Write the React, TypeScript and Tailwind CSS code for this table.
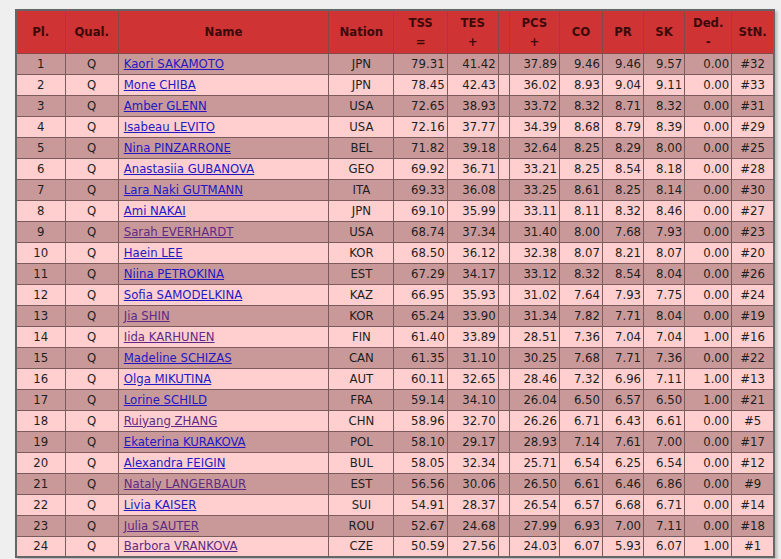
import React from "react";

type Row = [number, string, string, string, string, string, string, string, string, string, string, string, boolean];

const rows: Row[] = [
  [1, "Q", "Kaori SAKAMOTO", "JPN", "79.31", "41.42", "37.89", "9.46", "9.46", "9.57", "0.00", "#32", false],
  [2, "Q", "Mone CHIBA", "JPN", "78.45", "42.43", "36.02", "8.93", "9.04", "9.11", "0.00", "#33", false],
  [3, "Q", "Amber GLENN", "USA", "72.65", "38.93", "33.72", "8.32", "8.71", "8.32", "0.00", "#31", false],
  [4, "Q", "Isabeau LEVITO", "USA", "72.16", "37.77", "34.39", "8.68", "8.79", "8.39", "0.00", "#29", false],
  [5, "Q", "Nina PINZARRONE", "BEL", "71.82", "39.18", "32.64", "8.25", "8.29", "8.00", "0.00", "#25", false],
  [6, "Q", "Anastasiia GUBANOVA", "GEO", "69.92", "36.71", "33.21", "8.25", "8.54", "8.18", "0.00", "#28", false],
  [7, "Q", "Lara Naki GUTMANN", "ITA", "69.33", "36.08", "33.25", "8.61", "8.25", "8.14", "0.00", "#30", false],
  [8, "Q", "Ami NAKAI", "JPN", "69.10", "35.99", "33.11", "8.11", "8.32", "8.46", "0.00", "#27", false],
  [9, "Q", "Sarah EVERHARDT", "USA", "68.74", "37.34", "31.40", "8.00", "7.68", "7.93", "0.00", "#23", true],
  [10, "Q", "Haein LEE", "KOR", "68.50", "36.12", "32.38", "8.07", "8.21", "8.07", "0.00", "#20", false],
  [11, "Q", "Niina PETROKINA", "EST", "67.29", "34.17", "33.12", "8.32", "8.54", "8.04", "0.00", "#26", false],
  [12, "Q", "Sofia SAMODELKINA", "KAZ", "66.95", "35.93", "31.02", "7.64", "7.93", "7.75", "0.00", "#24", false],
  [13, "Q", "Jia SHIN", "KOR", "65.24", "33.90", "31.34", "7.82", "7.71", "8.04", "0.00", "#19", true],
  [14, "Q", "Iida KARHUNEN", "FIN", "61.40", "33.89", "28.51", "7.36", "7.04", "7.04", "1.00", "#16", true],
  [15, "Q", "Madeline SCHIZAS", "CAN", "61.35", "31.10", "30.25", "7.68", "7.71", "7.36", "0.00", "#22", false],
  [16, "Q", "Olga MIKUTINA", "AUT", "60.11", "32.65", "28.46", "7.32", "6.96", "7.11", "1.00", "#13", false],
  [17, "Q", "Lorine SCHILD", "FRA", "59.14", "34.10", "26.04", "6.50", "6.57", "6.50", "1.00", "#21", false],
  [18, "Q", "Ruiyang ZHANG", "CHN", "58.96", "32.70", "26.26", "6.71", "6.43", "6.61", "0.00", "#5", true],
  [19, "Q", "Ekaterina KURAKOVA", "POL", "58.10", "29.17", "28.93", "7.14", "7.61", "7.00", "0.00", "#17", false],
  [20, "Q", "Alexandra FEIGIN", "BUL", "58.05", "32.34", "25.71", "6.54", "6.25", "6.54", "0.00", "#12", false],
  [21, "Q", "Nataly LANGERBAUR", "EST", "56.56", "30.06", "26.50", "6.61", "6.46", "6.86", "0.00", "#9", true],
  [22, "Q", "Livia KAISER", "SUI", "54.91", "28.37", "26.54", "6.57", "6.68", "6.71", "0.00", "#14", false],
  [23, "Q", "Julia SAUTER", "ROU", "52.67", "24.68", "27.99", "6.93", "7.00", "7.11", "0.00", "#18", true],
  [24, "Q", "Barbora VRANKOVA", "CZE", "50.59", "27.56", "24.03", "6.07", "5.93", "6.07", "1.00", "#1", true],
];

const widths = [49, 53, 210, 65, 53, 51, 11, 50, 43, 41, 41, 47, 42];

export default function App() {
  const th = "border border-[#864848] font-bold text-[#3d0a0a] text-center align-middle p-0";
  const td = "border border-[#7a5c5c] h-[21px] p-0 leading-[16px]";
  const num = td + " text-right pr-[2px]";
  return (
    <div
      className="min-h-[559px] w-[781px] bg-[#efefef] pt-[9px] pl-[15px]"
      style={{ fontFamily: '"DejaVu Sans Condensed", "DejaVu Sans", Tahoma, sans-serif' }}
    >
      <table className="table-fixed border-collapse border-2 border-[#666] text-[13px] text-[#1e1e1e] w-[760px] shadow-[2px_2px_3px_rgba(0,0,0,0.25)]">
        <colgroup>
          {widths.map((w, i) => (
            <col key={i} style={{ width: w }} />
          ))}
        </colgroup>
        <thead>
          <tr className="bg-[#d03333] h-[43px]">
            <th className={th}>Pl.</th>
            <th className={th}>Qual.</th>
            <th className={th}>Name</th>
            <th className={th}>Nation</th>
            <th className={th}>
              <div className="leading-[21px]">TSS</div>
              <div className="leading-[18px]">=</div>
            </th>
            <th className={th}>
              <div className="leading-[21px]">TES</div>
              <div className="leading-[18px]">+</div>
            </th>
            <th className={th}></th>
            <th className={th}>
              <div className="leading-[21px]">PCS</div>
              <div className="leading-[18px]">+</div>
            </th>
            <th className={th}>CO</th>
            <th className={th}>PR</th>
            <th className={th}>SK</th>
            <th className={th}>
              <div className="leading-[21px]">Ded.</div>
              <div className="leading-[18px]">-</div>
            </th>
            <th className={th}>StN.</th>
          </tr>
        </thead>
        <tbody>
          {rows.map((r) => (
            <tr key={r[0]} className={r[0] % 2 === 1 ? "bg-[#c99999]" : "bg-[#ffcfcf]"}>
              <td className={td + " text-center"}>{r[0]}</td>
              <td className={td + " text-center"}>{r[1]}</td>
              <td className={td + " text-left pl-[5px]"}>
                <a href="#" className={"underline " + (r[12] ? "text-[#5e2a86]" : "text-[#2318c4]")}>
                  {r[2]}
                </a>
              </td>
              <td className={td + " text-center"}>{r[3]}</td>
              <td className={num}>{r[4]}</td>
              <td className={num}>{r[5]}</td>
              <td className={td}></td>
              <td className={num}>{r[6]}</td>
              <td className={num}>{r[7]}</td>
              <td className={num}>{r[8]}</td>
              <td className={num}>{r[9]}</td>
              <td className={num}>{r[10]}</td>
              <td className={td + " text-center"}>{r[11]}</td>
            </tr>
          ))}
        </tbody>
      </table>
    </div>
  );
}
